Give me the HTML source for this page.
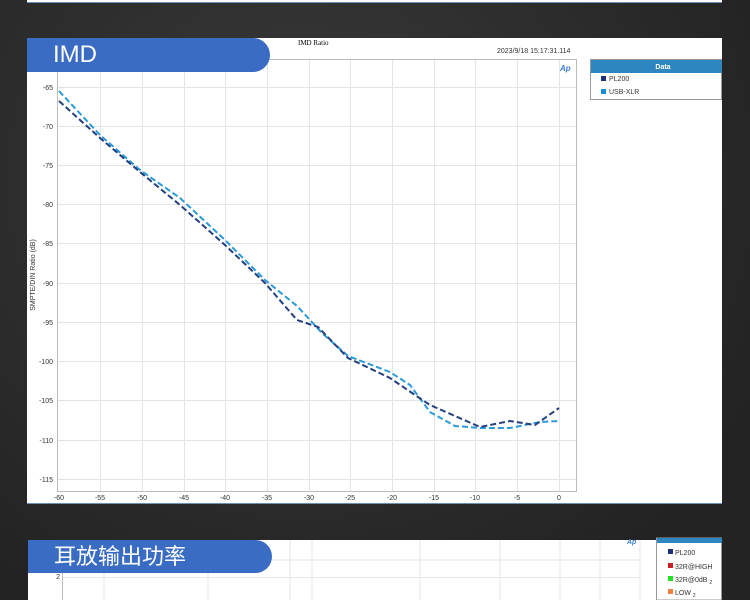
<!DOCTYPE html>
<html><head><meta charset="utf-8"><style>
*{margin:0;padding:0}
body{width:750px;height:600px;overflow:hidden;background:#2b2b2b;background:radial-gradient(ellipse at 40% 30%,#3a3a3a,#232323 80%);position:relative;font-family:"Liberation Sans",sans-serif}
.p{position:absolute;background:#fff}
.ban{position:absolute;background:#3a6cc4;color:#fff;border-radius:0 17px 17px 0;z-index:5}
svg{position:absolute;left:0;top:0}
</style></head><body>
<div class="p" style="left:27px;top:0;width:695px;height:2px;border-bottom:1px solid #6d8fb8"></div>
<div class="p" style="left:27px;top:38px;width:695px;height:465px;border-bottom:1px solid #6d8fb8"></div>
<div style="position:absolute;left:298px;top:39px;font-size:7px;font-family:'Liberation Serif',serif">IMD Ratio</div>
<div style="position:absolute;left:497px;top:48px;font-size:7px;color:#333">2023/9/18 15:17:31.114</div>
<svg width="750" height="600">
<rect x="57.5" y="59.5" width="519" height="432" fill="none" stroke="#bbb"/>
<g stroke="#e4e4e4" stroke-width="1">
<line x1="100.5" y1="60" x2="100.5" y2="491"/><line x1="142.5" y1="60" x2="142.5" y2="491"/><line x1="184.5" y1="60" x2="184.5" y2="491"/><line x1="225.5" y1="60" x2="225.5" y2="491"/><line x1="267.5" y1="60" x2="267.5" y2="491"/><line x1="309.5" y1="60" x2="309.5" y2="491"/><line x1="350.5" y1="60" x2="350.5" y2="491"/><line x1="392.5" y1="60" x2="392.5" y2="491"/><line x1="434.5" y1="60" x2="434.5" y2="491"/><line x1="475.5" y1="60" x2="475.5" y2="491"/><line x1="517.5" y1="60" x2="517.5" y2="491"/><line x1="559.5" y1="60" x2="559.5" y2="491"/>
<line x1="58" y1="87.5" x2="576" y2="87.5"/><line x1="58" y1="126.5" x2="576" y2="126.5"/><line x1="58" y1="165.5" x2="576" y2="165.5"/><line x1="58" y1="204.5" x2="576" y2="204.5"/><line x1="58" y1="243.5" x2="576" y2="243.5"/><line x1="58" y1="283.5" x2="576" y2="283.5"/><line x1="58" y1="322.5" x2="576" y2="322.5"/><line x1="58" y1="361.5" x2="576" y2="361.5"/><line x1="58" y1="400.5" x2="576" y2="400.5"/><line x1="58" y1="440.5" x2="576" y2="440.5"/><line x1="58" y1="479.5" x2="576" y2="479.5"/>
</g>
<g font-size="7" fill="#333" text-anchor="end">
<text x="53" y="90">-65</text><text x="53" y="129">-70</text><text x="53" y="168">-75</text><text x="53" y="207">-80</text><text x="53" y="246">-85</text><text x="53" y="286">-90</text><text x="53" y="325">-95</text><text x="53" y="364">-100</text><text x="53" y="403">-105</text><text x="53" y="443">-110</text><text x="53" y="482">-115</text>
</g>
<g font-size="7" fill="#333" text-anchor="middle">
<text x="59" y="500">-60</text><text x="100" y="500">-55</text><text x="142" y="500">-50</text><text x="184" y="500">-45</text><text x="225" y="500">-40</text><text x="267" y="500">-35</text><text x="309" y="500">-30</text><text x="350" y="500">-25</text><text x="392" y="500">-20</text><text x="434" y="500">-15</text><text x="475" y="500">-10</text><text x="517" y="500">-5</text><text x="559" y="500">0</text>
</g>
<text x="35" y="275" font-size="7" fill="#333" text-anchor="middle" transform="rotate(-90 35 275)">SMPTE/DIN Ratio (dB)</text>
<text x="560" y="71" font-size="8" fill="#3a7fd0" font-style="italic" font-weight="bold">Ap</text>
<polyline fill="none" stroke="#2a9ad8" stroke-width="2" stroke-dasharray="6,3" points="59,91 100,135 140,170 180,198 225,240 265,280 297,306 322,333 348,356 390,372 410,385 430,412 455,426 480,428 510,428 540,422 559,421"/>
<polyline fill="none" stroke="#24407e" stroke-width="2" stroke-dasharray="6,3" points="59,101 100,138 140,172 180,205 225,245 265,283 297,320 318,327 348,358 390,378 415,395 430,405 480,427 510,421 535,425 559,408"/>
<rect x="590.5" y="59.5" width="131" height="40" fill="#fff" stroke="#999"/>
<rect x="591" y="60" width="131" height="13" fill="#2e86c1"/>
<text x="663" y="69" font-size="7" font-weight="bold" fill="#fff" text-anchor="middle">Data</text>
<rect x="601" y="76" width="5" height="5" fill="#1f2f7a"/><text x="609" y="81" font-size="7" fill="#333">PL200</text>
<rect x="601" y="89" width="5" height="5" fill="#1a8ad4"/><text x="609" y="94" font-size="7" fill="#333">USB-XLR</text>
</svg>
<div class="ban" style="left:27px;top:38px;width:243px;height:34px;font-size:24px;line-height:34px;padding-left:26px;box-sizing:border-box">IMD</div>
<div class="p" style="left:28px;top:540px;width:694px;height:60px"></div>
<svg width="750" height="600">
<g stroke="#e6e6e6"><line x1="62" y1="560" x2="640" y2="560"/><line x1="62" y1="577.5" x2="640" y2="577.5"/>
<line x1="104" y1="540" x2="104" y2="600"/><line x1="208" y1="540" x2="208" y2="600"/><line x1="290" y1="540" x2="290" y2="600"/><line x1="312" y1="540" x2="312" y2="600"/><line x1="420" y1="540" x2="420" y2="600"/><line x1="500" y1="540" x2="500" y2="600"/><line x1="560" y1="540" x2="560" y2="600"/><line x1="600" y1="540" x2="600" y2="600"/><line x1="640" y1="540" x2="640" y2="600"/></g>
<line x1="62.5" y1="572" x2="62.5" y2="600" stroke="#bbb"/>
<text x="60" y="579" font-size="7" fill="#333" text-anchor="end">2</text>
<text x="627" y="544" font-size="7" fill="#3a7fd0" font-style="italic" font-weight="bold">Ap</text>
<rect x="656.5" y="538" width="65" height="62" fill="#fff" stroke="#999"/>
<rect x="657" y="538" width="65" height="5" fill="#2e86c1"/>
<rect x="668" y="549" width="5" height="5" fill="#1f2f7a"/><text x="675" y="555" font-size="7" fill="#333">PL200</text>
<rect x="668" y="563" width="5" height="5" fill="#c81e1e"/><text x="675" y="569" font-size="7" fill="#333">32R@HIGH</text>
<rect x="668" y="576" width="5" height="5" fill="#22e022"/><text x="675" y="582" font-size="7" fill="#333">32R@0dB <tspan font-size="5" dy="2">2</tspan></text>
<rect x="668" y="589" width="5" height="5" fill="#f08040"/><text x="675" y="595" font-size="7" fill="#333">LOW <tspan font-size="5" dy="2">2</tspan></text>
</svg>
<div class="ban" style="left:28px;top:540px;width:244px;height:33px;font-size:22px;line-height:33px;padding-left:26px;box-sizing:border-box;font-family:'Liberation Sans','Noto Sans CJK SC',sans-serif">耳放输出功率</div>
</body></html>
